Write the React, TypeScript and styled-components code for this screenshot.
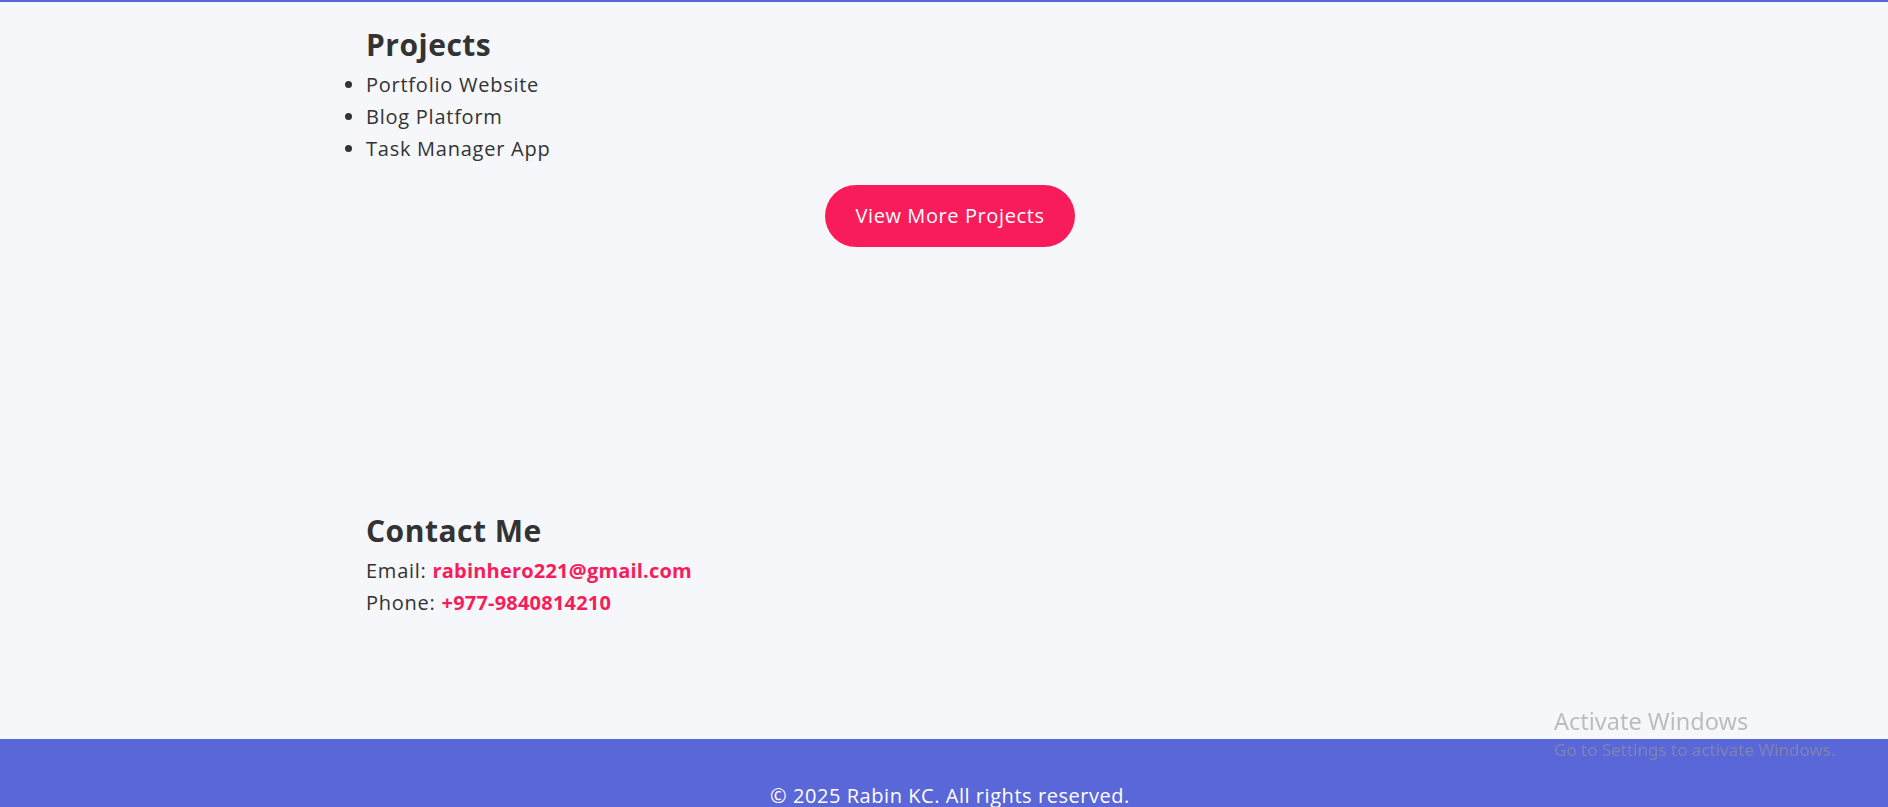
import React from "react";
import styled, { createGlobalStyle } from "styled-components";

const Global = createGlobalStyle`
  html, body { margin: 0; padding: 0; }
  body {
    background: #f5f7fa;
    color: #333333;
    font-family: "Open Sans", "Noto Sans", Arial, sans-serif;
    font-size: 20px;
    line-height: 32px;
    letter-spacing: 0.75px;
  }
`;

const Page = styled.div`
  border-top: 2px solid #5a67d8;
  display: flex;
  flex-direction: column;
`;

const Section = styled.section<{ $top: number; $bottom: number }>`
  padding: ${(p) => p.$top}px 354px ${(p) => p.$bottom}px 366px;
  display: flex;
  flex-direction: column;
`;

const Heading = styled.h2`
  margin: 0 0 6px;
  font-size: 30px;
  line-height: 36px;
  font-weight: 700;
  letter-spacing: 0.5px;
  color: #333333;
`;

const List = styled.ul`
  margin: 0;
  padding: 0;
  list-style: disc;
`;

const Item = styled.li`
  margin: 0;
  line-height: 32px;
  &::marker { color: #333333; }
`;

const ButtonRow = styled.div`
  display: flex;
  justify-content: center;
  margin-top: 20px;
`;

const Button = styled.a`
  display: inline-block;
  background: #f91c5a;
  color: #ffffff;
  padding: 15px 30px;
  border-radius: 31px;
  font-size: 20px;
  line-height: 32px;
  letter-spacing: 0.6px;
  text-decoration: none;
`;

const Line = styled.p`
  margin: 0;
  line-height: 32px;
`;

const Link = styled.a`
  color: #f91c5a;
  font-weight: 700;
  letter-spacing: 0.2px;
  text-decoration: none;
`;

const Footer = styled.footer`
  background: #5a67d8;
  color: #ffffff;
  text-align: center;
  padding: 41px 0 40px 12px;
  font-size: 20px;
  line-height: 32px;
  letter-spacing: 0.55px;
`;

const Watermark = styled.div`
  position: fixed;
  left: 1554px;
  top: 705px;
  font-family: "Noto Sans", "Open Sans", sans-serif;
  color: rgba(150, 150, 150, 0.6);
  letter-spacing: 0;
  pointer-events: none;
`;

const WmTitle = styled.div`
  font-size: 23.5px;
  line-height: 32px;
`;

const WmSub = styled.div`
  font-size: 17px;
  line-height: 26px;
`;

export default function App() {
  return (
    <>
      <Global />
      <Page>
        <Section $top={25} $bottom={0}>
          <Heading>Projects</Heading>
          <List>
            <Item>Portfolio Website</Item>
            <Item>Blog Platform</Item>
            <Item>Task Manager App</Item>
          </List>
          <ButtonRow>
            <Button href="#">View More Projects</Button>
          </ButtonRow>
        </Section>
        <Section $top={266} $bottom={120}>
          <Heading>Contact Me</Heading>
          <Line>
            Email: <Link href="#">rabinhero221@gmail.com</Link>
          </Line>
          <Line>
            Phone: <Link href="#">+977-9840814210</Link>
          </Line>
        </Section>
        <Footer>© 2025 Rabin KC. All rights reserved.</Footer>
      </Page>
      <Watermark>
        <WmTitle>Activate Windows</WmTitle>
        <WmSub>Go to Settings to activate Windows.</WmSub>
      </Watermark>
    </>
  );
}
